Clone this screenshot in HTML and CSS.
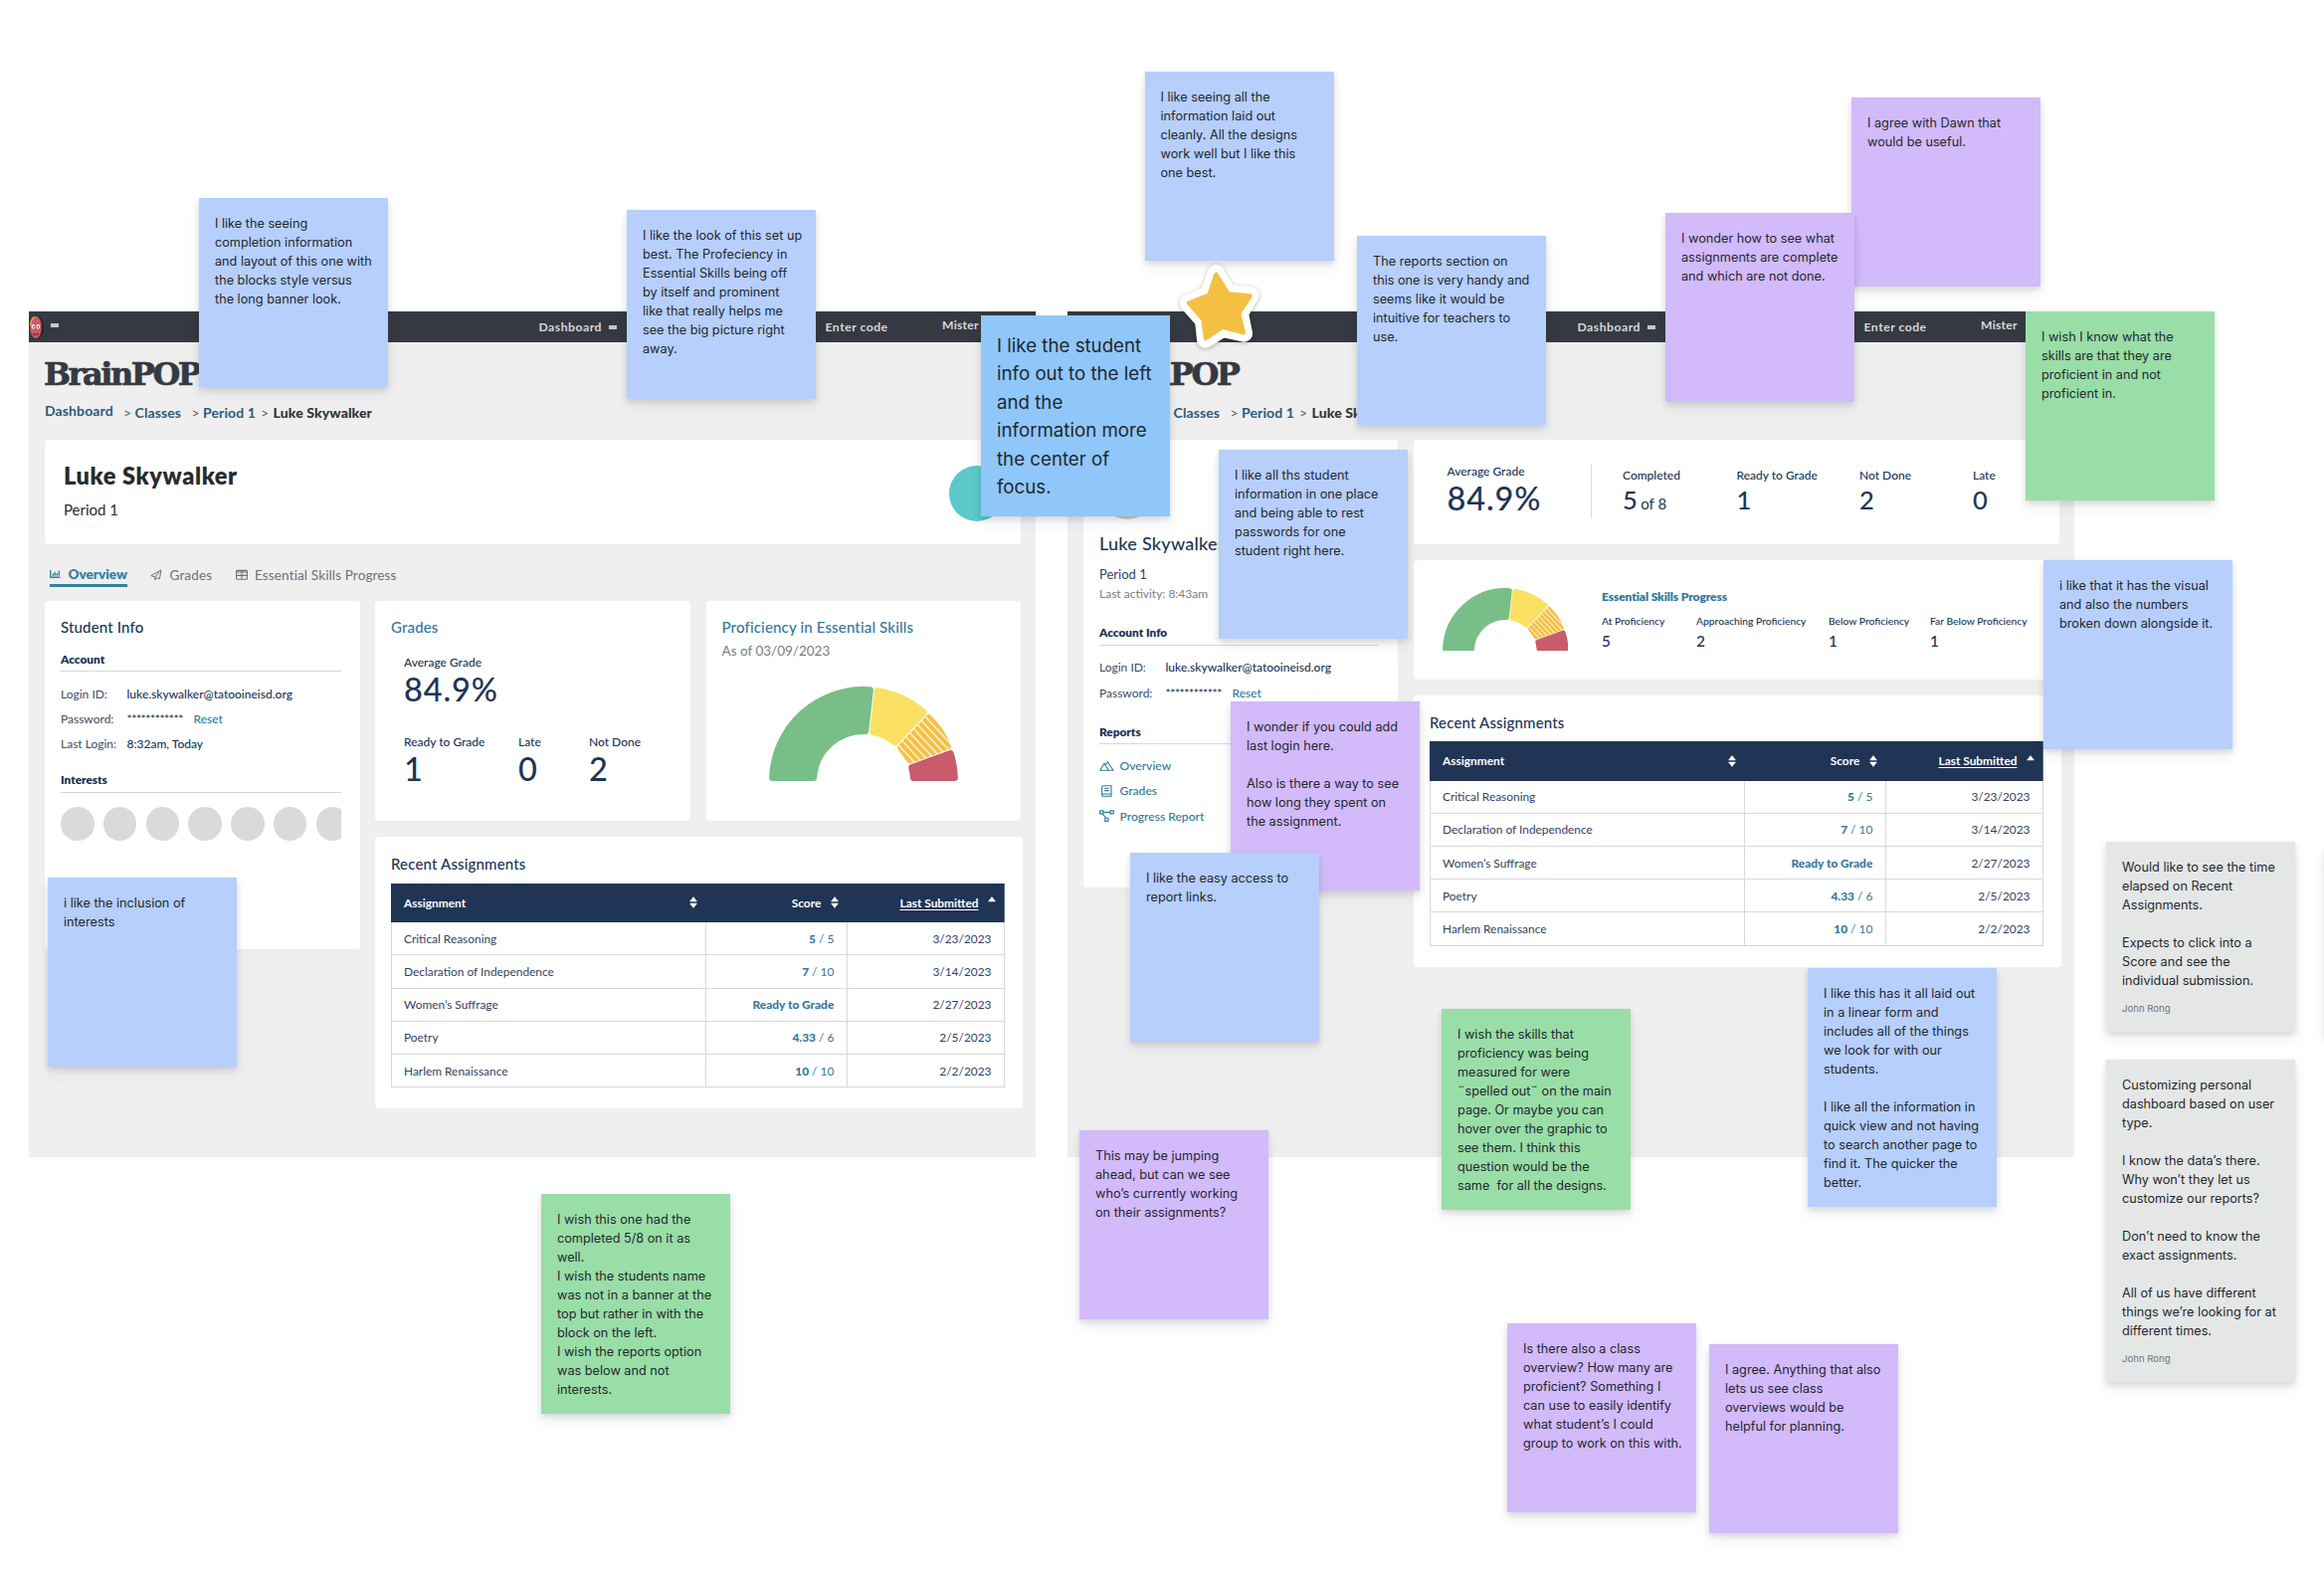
FILE: index.html
```html
<!DOCTYPE html>
<html lang="en">
<head>
<meta charset="utf-8">
<title>Student dashboard feedback board</title>
<link rel="stylesheet" href="styles.css">
</head>
<body>
<svg class="defs" width="0" height="0" aria-hidden="true">
  <defs>
    <pattern id="stripes" width="10" height="5.6" patternUnits="userSpaceOnUse" patternTransform="rotate(47)">
      <rect width="10" height="5.6" fill="#f3c043"/>
      <rect width="10" height="1.3" fill="#fffaf0"/>
    </pattern>
    <symbol id="gauge" viewBox="5 5 190 95">
      <g stroke-width="7" stroke-linejoin="round">
        <path d="M8.57 96.5A91.5 91.5 0 0 1 106.38 8.72L101.73 49.53A50.5 50.5 0 0 0 49.62 96.5Z" fill="#78be87" stroke="#78be87"/>
        <path d="M114.31 9.63A91.5 91.5 0 0 1 160.15 31.05L131.82 60.79A50.5 50.5 0 0 0 109.67 50.44Z" fill="#fae164" stroke="#fae164"/>
        <path d="M165.94 36.57A91.5 91.5 0 0 1 184.53 64.97L145.94 79.03A50.5 50.5 0 0 0 137.61 66.3Z" fill="url(#stripes)" stroke="url(#stripes)"/>
        <path d="M187.27 72.5A91.5 91.5 0 0 1 191.43 96.5L150.38 96.5A50.5 50.5 0 0 0 148.67 86.54Z" fill="#c95b6a" stroke="#c95b6a"/>
      </g>
    </symbol>
    <symbol id="moby" viewBox="0 0 16 24">
      <ellipse cx="8" cy="12" rx="7" ry="11.6" fill="#24272c"/>
      <ellipse cx="7" cy="12" rx="5.8" ry="11.2" fill="#d0596a"/>
      <path d="M1.9 11C1.7 6 3 3 5.6 1.4" fill="none" stroke="#f0a63c" stroke-width="1.4"/>
      <ellipse cx="4.5" cy="11.3" rx="1.7" ry="2.4" fill="#fff"/>
      <ellipse cx="9.3" cy="11.3" rx="1.7" ry="2.4" fill="#fff"/>
      <rect x="4.2" y="10.6" width="1.2" height="1.8" fill="#222"/>
      <rect x="8.8" y="10.6" width="1.2" height="1.8" fill="#222"/>
      <path d="M3.8 19H10" fill="none" stroke="#4a1a22" stroke-width="1"/>
    </symbol>
    <symbol id="sort" viewBox="0 0 8 12">
      <path d="M4 .6L7.4 4.9H.6ZM4 11.4L7.4 7.1H.6Z" fill="#fff" stroke="#fff" stroke-width=".6" stroke-linejoin="round"/>
    </symbol>
    <symbol id="sort-up" viewBox="0 0 8 12">
      <path d="M4 .6L7.4 4.9H.6Z" fill="#fff" stroke="#fff" stroke-width=".6" stroke-linejoin="round"/>
    </symbol>
  </defs>
</svg>

<main class="canvas">
  <section class="board board-a">
    <header class="nav">
      <svg class="moby"><use href="#moby"/></svg><i class="dash dash-up"></i><span>Dashboard</span><i class="dash"></i><span>Enter code</span><span class="user">Mister</span>
    </header>
    <div class="logo">BrainPOP</div>
    <nav class="crumbs"><a class="first">Dashboard</a><i>&gt;</i><a>Classes</a><i>&gt;</i><a>Period 1</a><i>&gt;</i><b>Luke Skywalker</b></nav>
    <div class="card banner">
      <div>
        <h1>Luke Skywalker</h1>
        <p>Period 1</p>
      </div>
      <span class="teal"></span>
    </div>
    <div class="tabs">
      <span class="tab active"><svg viewBox="0 0 12 12"><path d="M.8 1.5V9.6H11.5M3.6 8V5.4M5.6 8V3.6M7.8 8V5M10.2 8V2.2" fill="none" stroke="currentColor" stroke-width="1.5"/></svg>Overview</span>
      <span class="tab tab-grades"><svg viewBox="0 0 12 12"><path d="M.8 6.6L11 .9L9.4 9.8L6.4 8.6L4.8 11V8L.8 6.6ZM4.8 8L9.3 3" fill="none" stroke="currentColor" stroke-linejoin="round"/></svg>Grades</span>
      <span class="tab tab-skills"><svg viewBox="0 0 12 12"><rect x=".6" y="1.4" width="10.8" height="8.8" rx=".8" fill="none" stroke="currentColor" stroke-width="1.1"/><path d="M.6 3H11.4M.6 6.4H11.4M6 2V10" stroke="currentColor" stroke-width="1.1"/></svg>Essential Skills Progress</span>
    </div>
    <div class="body-a">
      <article class="card info">
        <h2>Student Info</h2>
        <h3 class="acct">Account</h3>
        <dl class="rows">
          <dt>Login ID:</dt><dd class="mail">luke.skywalker@tatooineisd.org</dd>
          <dt>Password:</dt><dd><span class="stars">************</span><a>Reset</a></dd>
          <dt>Last Login:</dt><dd>8:32am, Today</dd>
        </dl>
        <h3 class="interests">Interests</h3>
        <div class="dots"><i></i><i></i><i></i><i></i><i></i><i></i><i></i></div>
      </article>
      <div class="col">
        <div class="pair">
          <article class="card grades">
            <h2 class="link">Grades</h2>
            <div class="stat"><span>Average Grade</span><b>84.9%</b></div>
            <div class="stats">
              <div class="stat"><span>Ready to Grade</span><b>1</b></div>
              <div class="stat"><span>Late</span><b>0</b></div>
              <div class="stat"><span>Not Done</span><b>2</b></div>
            </div>
          </article>
          <article class="card prof">
            <h2 class="link">Proficiency in Essential Skills</h2>
            <p>As of 03/09/2023</p>
            <svg class="gauge"><use href="#gauge"/></svg>
          </article>
        </div>
        <article class="card recent">
          <h2>Recent Assignments</h2>
          <div class="table">
            <div class="th"><span>Assignment</span><svg><use href="#sort"/></svg></div><div class="th end"><span>Score</span><svg><use href="#sort"/></svg></div><div class="th end"><u>Last Submitted</u><svg><use href="#sort-up"/></svg></div>
            <div>Critical Reasoning</div><div class="score"><span><b>5</b> / 5</span></div><div class="end">3/23/2023</div>
            <div>Declaration of Independence</div><div class="score"><span><b>7</b> / 10</span></div><div class="end">3/14/2023</div>
            <div>Women’s Suffrage</div><div class="score"><span><b>Ready to Grade</b></span></div><div class="end">2/27/2023</div>
            <div>Poetry</div><div class="score"><span><b>4.33</b> / 6</span></div><div class="end">2/5/2023</div>
            <div>Harlem Renaissance</div><div class="score"><span><b>10</b> / 10</span></div><div class="end">2/2/2023</div>
          </div>
        </article>
      </div>
    </div>
  </section>

  <section class="board board-b">
    <header class="nav">
      <svg class="moby"><use href="#moby"/></svg><i class="dash dash-up"></i><span>Dashboard</span><i class="dash"></i><span>Enter code</span><span class="user">Mister</span>
    </header>
    <div class="logo">BrainPOP</div>
    <nav class="crumbs"><a class="first">Dashboard</a><i>&gt;</i><a>Classes</a><i>&gt;</i><a>Period 1</a><i>&gt;</i><b>Luke Skywalker</b></nav>
    <div class="body-b">
      <article class="card profile">
        <span class="avatar"></span>
        <h1>Luke Skywalker</h1>
        <p class="period">Period 1</p>
        <p class="activity">Last activity: 8:43am</p>
        <h3 class="acct">Account Info</h3>
        <dl class="rows">
          <dt>Login ID:</dt><dd class="mail">luke.skywalker@tatooineisd.org</dd>
          <dt>Password:</dt><dd><span class="stars">************</span><a>Reset</a></dd>
        </dl>
        <h3 class="reports">Reports</h3>
        <div class="links">
          <a><svg viewBox="0 0 15 12"><path d="M.8 10.2L5 3.2L9.4 10.2ZM6.2 5L8.4 1.8L14 10.2H9.4" fill="none" stroke="currentColor" stroke-width="1.1" stroke-linejoin="round"/></svg>Overview</a>
          <a><svg viewBox="0 0 15 12"><path d="M12 .8H4Q2.6.8 2.6 2.2V10Q2.6 11.3 4 11.3H12ZM2.8 9H12M5 3.2H9.8M5 5.6H9.8" fill="none" stroke="currentColor" stroke-width="1.1"/></svg>Grades</a>
          <a><svg viewBox="0 0 15 12"><path d="M.7.9H3.9V3.9H.7ZM11 .9H14.2V3.9H11ZM5.8 8.2H9V11.4H5.8ZM3.9 2.4H11M3.2 3.9L6.6 8.2" fill="none" stroke="currentColor" stroke-width="1.1"/></svg>Progress Report</a>
        </div>
      </article>
      <div class="col">
        <article class="card summary">
          <div class="stat avg"><span>Average Grade</span><b>84.9%</b></div>
          <i class="rule"></i>
          <div class="stat small"><span>Completed</span><b>5 <em>of 8</em></b></div>
          <div class="stat small"><span>Ready to Grade</span><b>1</b></div>
          <div class="stat small"><span>Not Done</span><b>2</b></div>
          <div class="stat small"><span>Late</span><b>0</b></div>
        </article>
        <article class="card skills">
          <svg class="gauge"><use href="#gauge"/></svg>
          <div>
            <h4>Essential Skills Progress</h4>
            <div class="levels">
              <span>At Proficiency</span><span>Approaching Proficiency</span><span>Below Proficiency</span><span>Far Below Proficiency</span>
              <b>5</b><b>2</b><b>1</b><b>1</b>
            </div>
          </div>
        </article>
        <article class="card recent">
          <h2>Recent Assignments</h2>
          <div class="table">
            <div class="th"><span>Assignment</span><svg><use href="#sort"/></svg></div><div class="th end"><span>Score</span><svg><use href="#sort"/></svg></div><div class="th end"><u>Last Submitted</u><svg><use href="#sort-up"/></svg></div>
            <div>Critical Reasoning</div><div class="score"><span><b>5</b> / 5</span></div><div class="end">3/23/2023</div>
            <div>Declaration of Independence</div><div class="score"><span><b>7</b> / 10</span></div><div class="end">3/14/2023</div>
            <div>Women’s Suffrage</div><div class="score"><span><b>Ready to Grade</b></span></div><div class="end">2/27/2023</div>
            <div>Poetry</div><div class="score"><span><b>4.33</b> / 6</span></div><div class="end">2/5/2023</div>
            <div>Harlem Renaissance</div><div class="score"><span><b>10</b> / 10</span></div><div class="end">2/2/2023</div>
          </div>
        </article>
      </div>
    </div>
  </section>

  <div class="note blue n1">I like the seeing
completion information
and layout of this one with
the blocks style versus
the long banner look.</div>
  <div class="note blue n2">I like the look of this set up
best. The Profeciency in
Essential Skills being off
by itself and prominent
like that really helps me
see the big picture right
away.</div>
  <div class="note sky n3">I like the student
info out to the left
and the
information more
the center of
focus.</div>
  <div class="note blue n4">I like seeing all the
information laid out
cleanly. All the designs
work well but I like this
one best.</div>
  <svg class="star" viewBox="0 0 100 110">
    <path d="M42.4 24.5L54.5 44.5L77.2 46.5L66.5 65L70.5 85.2L49 80.5L31.5 91.2L29.5 72L14 54.5L34.5 46Z" fill="#fff" stroke="#fff" stroke-width="17" stroke-linejoin="round"/>
    <path d="M42.4 26L54.5 45.5L76.5 47.5L65 65L69.8 84.2L49 78.5L32 90L29.5 71L15 54.5L35.5 46.5Z" fill="#f3c043" stroke="#f3c043" stroke-width="4.5" stroke-linejoin="round"/>
  </svg>
  <div class="note blue n5">The reports section on
this one is very handy and
seems like it would be
intuitive for teachers to
use.</div>
  <div class="note purple n7">I agree with Dawn that
would be useful.</div>
  <div class="note purple n6">I wonder how to see what
assignments are complete
and which are not done.</div>
  <div class="note green n8">I wish I know what the
skills are that they are
proficient in and not
proficient in.</div>
  <div class="note blue n9">I like all ths student
information in one place
and being able to rest
passwords for one
student right here.</div>
  <div class="note purple n10">I wonder if you could add
last login here.

Also is there a way to see
how long they spent on
the assignment.</div>
  <div class="note blue n11">I like the easy access to
report links.</div>
  <div class="note blue n12">i like the inclusion of
interests</div>
  <div class="note blue n13">i like that it has the visual
and also the numbers
broken down alongside it.</div>
  <div class="note blue n14">I like this has it all laid out
in a linear form and
includes all of the things
we look for with our
students.

I like all the information in
quick view and not having
to search another page to
find it. The quicker the
better.</div>
  <div class="note green n15">I wish the skills that
proficiency was being
measured for were
¨spelled out¨ on the main
page. Or maybe you can
hover over the graphic to
see them. I think this
question would be the
same  for all the designs.</div>
  <div class="note purple n16">This may be jumping
ahead, but can we see
who’s currently working
on their assignments?</div>
  <div class="note green n17">I wish this one had the
completed 5/8 on it as
well.
I wish the students name
was not in a banner at the
top but rather in with the
block on the left.
I wish the reports option
was below and not
interests.</div>
  <div class="note purple n18">Is there also a class
overview? How many are
proficient? Something I
can use to easily identify
what student’s I could
group to work on this with.</div>
  <div class="note purple n19">I agree. Anything that also
lets us see class
overviews would be
helpful for planning.</div>
  <div class="note grey n20">Would like to see the time
elapsed on Recent
Assignments.

Expects to click into a
Score and see the
individual submission.<small>John Rong</small></div>
  <div class="note grey n21">Customizing personal
dashboard based on user
type.

I know the data’s there.
Why won’t they let us
customize our reports?

Don’t need to know the
exact assignments.

All of us have different
things we’re looking for at
different times.<small>John Rong</small></div>
  <div class="note grey n22"></div>
</main>
</body>
</html>
```

FILE: styles.css
```css
* { box-sizing: border-box; margin: 0; padding: 0; }
body { background: #fff; font-family: Lato, "Open Sans", sans-serif; color: #203455; }
i, em { font-style: normal; }
.defs { position: absolute; }
.canvas { position: relative; width: 2336px; height: 1586px; overflow: hidden; background: #fff; }

/* boards */
.board { position: absolute; top: 313px; width: 1012px; height: 849.5px; background: #efefef; overflow: hidden; }
.board-a { left: 29px; }
.board-b { left: 1073px; }
.nav { display: grid; grid-template-columns: 21.5px 491px 70.5px 217.5px 117.5px 1fr; align-items: center; height: 31px; background: #353a42; color: #d6d8da; font-size: 12.2px; font-weight: 700; line-height: 16px; letter-spacing: .5px; }
.moby { width: 16px; height: 24px; }
.user { margin-top: -4px; letter-spacing: .2px; }
.dash { width: 8px; height: 4px; background: #c6c8cb; }
.dash-up { margin-top: -4px; }
.logo { margin: 12.5px 0 0 15px; font: 700 32px/38px "DejaVu Serif", serif; letter-spacing: -2.45px; color: #353a42; white-space: nowrap; -webkit-text-stroke: .7px #353a42; }
.crumbs { display: grid; grid-template-columns: 79px 11.5px 57px 11.5px 58px 12.5px 1fr; margin: 10px 0 17px 16px; font-size: 14px; line-height: 20px; font-weight: 700; color: #2b5c7b; letter-spacing: .12px; white-space: nowrap; }
.crumbs i { font-weight: 400; color: #555b63; }
.crumbs b { color: #30353c; }
.crumbs .first { margin-top: -1.5px; }
.card { background: #fff; border-radius: 4px; }
h2 { font-size: 15px; line-height: 20px; font-weight: 500; letter-spacing: .16px; white-space: nowrap; }
h3 { font-size: 11.8px; line-height: 16px; font-weight: 800; padding-bottom: 3.5px; border-bottom: 1px solid #d5d8d9; }
.link { color: #33799c; }

/* banner and tabs */
.banner { display: flex; justify-content: space-between; margin-left: 16px; width: 980.5px; height: 105.5px; padding: 22.5px 15.5px 0 19px; color: #2a2b2d; }
.banner h1 { font-size: 23.5px; line-height: 28px; font-weight: 800; letter-spacing: .6px; }
.banner p { margin-top: 10px; font-size: 15px; line-height: 20px; }
.teal { width: 56px; height: 56px; margin-top: 4px; border-radius: 50%; background: #5bc8ca; }
.tabs { display: flex; margin: 20px 0 0 21px; font-size: 13.5px; line-height: 20px; color: #6b7078; letter-spacing: .14px; white-space: nowrap; }
.tab { display: flex; align-items: center; height: 21px; }
.tab svg { width: 12px; height: 12px; margin-right: 7.5px; }
.tab.active { width: 78px; height: 23px; border-bottom: 3px solid #37819f; color: #37819f; font-weight: 800; letter-spacing: 0; }
.tab-grades { margin-left: 23px; width: 63px; }
.tab-skills { margin-left: 22.5px; }

/* first layout */
.body-a { display: flex; gap: 15.5px; margin: 13.5px 0 0 16px; }
.info { width: 316.5px; height: 350px; padding: 16.5px 19px 0 16px; }
.acct { margin-top: 14.5px; }
.rows { display: grid; grid-template-columns: 66.5px 1fr; margin-top: 9.5px; font-size: 12px; line-height: 25.3px; white-space: nowrap; }
.rows dt { color: #3b4b66; }
.rows dd { display: flex; font-weight: 500; }
.rows a, .links a { color: #33799c; }
.stars { width: 67px; letter-spacing: -.4px; }
.interests { margin-top: 16px; }
.dots { display: flex; gap: 9.3px; margin-top: 14.5px; overflow: hidden; }
.dots i { flex: none; width: 33.5px; height: 33.5px; border-radius: 50%; background: #d9dbdb; }
.col { display: flex; flex-direction: column; gap: 16px; }
.pair { display: flex; gap: 16px; }
.grades, .prof { width: 316.5px; height: 221.5px; padding: 16.5px 16px 0; }
.stat { display: flex; flex-direction: column; gap: 1px; white-space: nowrap; }
.stat span { font-size: 12px; line-height: 16px; font-weight: 500; }
.stat b { font-size: 32.5px; line-height: 36px; font-weight: 500; letter-spacing: .9px; }
.grades > .stat { margin: 17.5px 0 27px 13px; }
.stats { display: grid; grid-template-columns: 115px 71px 1fr; margin-left: 13px; }
.prof p { margin-top: 5px; font-size: 13.5px; line-height: 18px; color: #7a7d82; }
.prof .gauge { display: block; width: 190px; height: 95px; margin: 27px auto 0; }
.recent { width: 650.5px; height: 273px; padding: 17px 16px 0; }
.recent h2 { height: 29.5px; }
.table { display: grid; grid-template-columns: 316px 142.3px 158.2px; grid-template-rows: 39.7px repeat(5, 33.2px); border-left: 1px solid #d6d9db; width: 616.5px; font-size: 11.9px; color: #33435f; }
.table > div { display: flex; align-items: center; padding: 0 13px 0 12px; border-right: 1px solid #d6d9db; border-bottom: 1px solid #d6d9db; white-space: nowrap; }
.table > .th { justify-content: space-between; margin-left: -1px; padding: 0 8.5px 0 13px; background: #203455; border-bottom: 0; border-color: #5d6c85; color: #fff; font-weight: 700; }
.table > .end { justify-content: flex-end; }
.th svg { width: 8px; height: 12px; }
.th.end svg { margin-left: 9.5px; }
.table > .score { justify-content: flex-end; color: #33799c; }
.score b { font-weight: 900; }
.th u { text-underline-offset: 2px; }

/* second layout */
.body-b { display: flex; gap: 16px; margin-left: 16px; }
.profile { width: 316px; height: 450.5px; padding: 24.5px 19px 0 16px; }
.avatar { display: block; width: 56px; height: 56px; border-radius: 50%; background: #c9cbcc; }
.profile h1 { margin-top: 12px; font-size: 18px; line-height: 24px; font-weight: 500; letter-spacing: .25px; }
.period { margin-top: 10px; font-size: 13px; line-height: 18px; color: #33435f; }
.activity { margin-top: 3.4px; font-size: 12px; line-height: 16px; color: #7a7d82; }
.profile .acct { margin-top: 23px; }
.reports { margin-top: 18.7px; }
.links { display: flex; flex-direction: column; margin-top: 9px; font-size: 12.1px; line-height: 25.3px; font-weight: 500; }
.links a { display: flex; align-items: center; height: 25.3px; }
.links svg { width: 15px; height: 12px; margin-right: 5.5px; }
.summary { display: grid; grid-template-columns: 144px 32.5px 114.5px 123.5px 114px 1fr; width: 648.5px; height: 105px; padding: 24px 0 0 33.5px; }
.rule { width: 1px; height: 55px; background: #dcdfe1; }
.stat.small { margin-top: 4px; }
.stat.small b { font-size: 25.5px; line-height: 30px; letter-spacing: 0; }
.stat em { margin-left: -3px; font-size: 15px; font-weight: 400; }
.skills { display: flex; gap: 34px; height: 120px; padding: 28.3px 0 0 28.5px; width: 648.5px; }
.skills .gauge { width: 126.5px; height: 63.3px; }
.skills h4 { margin-top: 1px; font-size: 12px; line-height: 16px; font-weight: 800; letter-spacing: -.1px; color: #33799c; }
.levels { display: grid; grid-template-columns: 95px 133px 102px 1fr; row-gap: 3.2px; margin-top: 9.3px; font-size: 10.3px; line-height: 14px; font-weight: 500; white-space: nowrap; }
.levels b { font-size: 15.3px; line-height: 20px; font-weight: 500; }

/* sticky notes */
.note { position: absolute; width: 190px; height: 190px; padding: 16px; font: 400 12.7px/19px Inter, "Liberation Sans", sans-serif; color: #23272e; white-space: pre; box-shadow: 0 3px 6px rgba(40, 50, 50, .15), 0 8px 14px rgba(40, 50, 50, .06); }
.blue { background: #b6cffc; }
.sky { background: #8fc7fa; }
.purple { background: #d2bafb; }
.green { background: #99dea7; }
.grey { background: #e5e7e7; }
.note small { display: block; margin-top: 10px; font-size: 9.6px; line-height: 18px; color: #6f7379; }
.n1 { left: 200px; top: 199px; }
.n2 { left: 630px; top: 211px; }
.n3 { left: 986px; top: 316.5px; height: 202.5px; padding-top: 17px; font-size: 18.7px; line-height: 28.5px; }
.n4 { left: 1150.5px; top: 72px; }
.n5 { left: 1364px; top: 237px; }
.n6 { left: 1674px; top: 214px; }
.n7 { left: 1861px; top: 98px; }
.n8 { left: 2036px; top: 312.5px; }
.n9 { left: 1225px; top: 452px; }
.n10 { left: 1237px; top: 705px; }
.n11 { left: 1136px; top: 857px; }
.n12 { left: 48px; top: 882px; }
.n13 { left: 2054px; top: 562.5px; }
.n14 { left: 1817px; top: 973px; height: 240px; }
.n15 { left: 1449px; top: 1014px; height: 202px; }
.n16 { left: 1085px; top: 1136px; }
.n17 { left: 544px; top: 1200px; height: 221px; }
.n18 { left: 1515px; top: 1330px; }
.n19 { left: 1718px; top: 1351px; }
.n20 { left: 2117px; top: 846px; height: 191px; }
.n21 { left: 2117px; top: 1065px; height: 324px; }
.n22 { left: 2337px; top: 850px; height: 190px; }
.star { position: absolute; left: 1180px; top: 250px; width: 100px; height: 110px; filter: drop-shadow(0 1px 2px rgba(0, 0, 0, .28)); }
```
